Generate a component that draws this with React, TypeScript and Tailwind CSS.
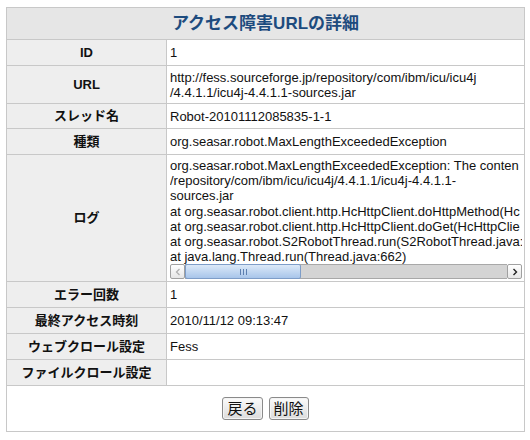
import React from "react";

const font = { fontFamily: '"Liberation Sans", Arial, "Noto Sans CJK JP", sans-serif' };

function Row({ label, h, children }: { label: string; h: string; children?: React.ReactNode }) {
  return (
    <div className={`flex border-t border-[#c8c8c8] ${h}`}>
      <div className="w-[160px] shrink-0 bg-[#eeeeee] border-r border-[#c8c8c8] flex items-center justify-center font-bold text-[13px] text-[#111]">
        {label}
      </div>
      <div className="flex-1 min-w-0 flex items-center pl-[3px] pr-[2px] text-[13px] leading-[15px] text-[#111]">
        {children}
      </div>
    </div>
  );
}

function Btn({ children }: { children: React.ReactNode }) {
  return (
    <button className="h-[23px] px-[4px] rounded-[3px] border border-[#8a8a8a] bg-gradient-to-b from-[#fbfbfb] to-[#dcdcdc] text-[15px] leading-[19px] text-[#111] shadow-[inset_0_0_0_1px_#f4f4f4]">
      {children}
    </button>
  );
}

export default function App() {
  const logLines = [
    "org.seasar.robot.MaxLengthExceededException: The conten",
    "/repository/com/ibm/icu/icu4j/4.4.1.1/icu4j-4.4.1.1-",
    "sources.jar",
    "at org.seasar.robot.client.http.HcHttpClient.doHttpMethod(Hc",
    "at org.seasar.robot.client.http.HcHttpClient.doGet(HcHttpClie",
    "at org.seasar.robot.S2RobotThread.run(S2RobotThread.java:",
    "at java.lang.Thread.run(Thread.java:662)",
  ];
  return (
    <div className="w-[530px] h-[440px] bg-white pt-[7px] pl-[6px]" style={font}>
      <div className="w-[519px] border border-[#c8c8c8]">
        <div className="h-[31px] bg-[#e6e6e6] flex items-center justify-center text-[17px] font-bold text-[#1d4b7e]">
          アクセス障害URLの詳細
        </div>
        <Row label="ID" h="h-[26px]">1</Row>
        <Row label="URL" h="h-[38px]">
          <div>
            http://fess.sourceforge.jp/repository/com/ibm/icu/icu4j
            <br />
            /4.4.1.1/icu4j-4.4.1.1-sources.jar
          </div>
        </Row>
        <Row label="スレッド名" h="h-[25px]">Robot-20101112085835-1-1</Row>
        <Row label="種類" h="h-[26px]">org.seasar.robot.MaxLengthExceededException</Row>
        <Row label="ログ" h="h-[127px]">
          <div className="w-full flex flex-col pt-[1px]">
            <div className="h-[106px] overflow-hidden leading-[15.2px]">
              {logLines.map((l, i) => (
                <div key={i} className="whitespace-nowrap">{l}</div>
              ))}
            </div>
            <div className="h-[15px] flex items-stretch">
              <div className="w-[15px] shrink-0 rounded-[2px] border border-[#a0a0a0] bg-gradient-to-b from-[#ffffff] to-[#e6e6e6] flex items-center justify-center">
                <svg width="6" height="8" viewBox="0 0 6 8"><path d="M4.5 1 L1.5 4 L4.5 7" fill="none" stroke="#b0b0b0" strokeWidth="1.3" /></svg>
              </div>
              <div className="flex-1 flex bg-[#d4d4d4] border-y border-[#a8a8a8]">
                <div className="w-[116px] rounded-[2px] border border-[#7e9dc8] bg-gradient-to-b from-[#dce9f8] to-[#a8c5ea] flex items-center justify-center -my-[1px]">
                  <svg width="7" height="6" viewBox="0 0 7 6"><path d="M0.5 0 V6 M3.5 0 V6 M6.5 0 V6" stroke="#5d7fb0" strokeWidth="1" /></svg>
                </div>
              </div>
              <div className="w-[15px] shrink-0 rounded-[2px] border border-[#a0a0a0] bg-gradient-to-b from-[#ffffff] to-[#e6e6e6] flex items-center justify-center">
                <svg width="6" height="8" viewBox="0 0 6 8"><path d="M1.5 1 L4.5 4 L1.5 7" fill="none" stroke="#222" strokeWidth="1.4" /></svg>
              </div>
            </div>
          </div>
        </Row>
        <Row label="エラー回数" h="h-[26px]">1</Row>
        <Row label="最終アクセス時刻" h="h-[26px]">2010/11/12 09:13:47</Row>
        <Row label="ウェブクロール設定" h="h-[26px]">Fess</Row>
        <Row label="ファイルクロール設定" h="h-[26px]"></Row>
        <div className="h-[46px] border-t border-[#c8c8c8] flex items-center justify-center gap-[6px]">
          <Btn>戻る</Btn>
          <Btn>削除</Btn>
        </div>
      </div>
    </div>
  );
}
